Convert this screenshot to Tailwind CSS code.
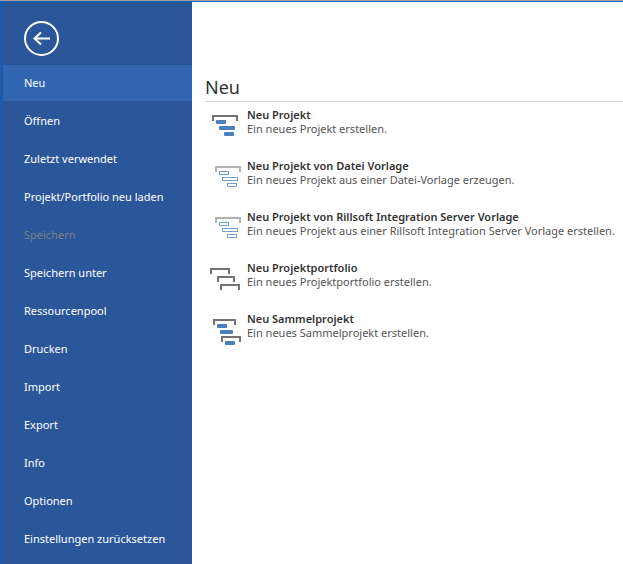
<!DOCTYPE html>
<html lang="de">
<head>
<meta charset="utf-8">
<meta name="viewport" content="width=device-width, initial-scale=1">
<title>Neu</title>
<script src="https://cdn.jsdelivr.net/npm/@tailwindcss/browser@4"></script>
</head>
<body class="min-h-screen bg-white font-['Noto_Sans',sans-serif] text-[11px] leading-[14px]">
<div class="flex min-h-screen flex-col">
  <div class="h-0.5 border-t border-[#a0a0a0] bg-[#1a5fb4]"></div>
  <div class="flex flex-1">
    <nav aria-label="Datei" class="w-48 shrink-0 border-l border-[#0a60c8] bg-[#2b579a] pl-0.5 text-white">
      <button type="button" aria-label="Zurück" class="mt-[18px] mb-2 ml-5 block">
        <svg class="block size-[37px]" viewBox="0 0 37 37" fill="none" stroke="#fff" stroke-width="2">
          <circle cx="18.5" cy="18.5" r="16.5"/>
          <path d="M27 18.5H11.5M18 12.5L11.5 18.5L18 24.5" stroke-width="2"/>
        </svg>
      </button>
      <ul class="flex flex-col gap-0.5">
        <li><a href="#" aria-current="page" class="flex h-9 items-center bg-[#3165b1] pl-[21px]">Neu</a></li>
        <li><a href="#" class="flex h-9 items-center pl-[21px]">Öffnen</a></li>
        <li><a href="#" class="flex h-9 items-center pl-[21px]">Zuletzt verwendet</a></li>
        <li><a href="#" class="flex h-9 items-center pl-[21px]">Projekt/Portfolio neu laden</a></li>
        <li><a aria-disabled="true" class="flex h-9 items-center pl-[21px] text-[#7d7f86]">Speichern</a></li>
        <li><a href="#" class="flex h-9 items-center pl-[21px]">Speichern unter</a></li>
        <li><a href="#" class="flex h-9 items-center pl-[21px]">Ressourcenpool</a></li>
        <li><a href="#" class="flex h-9 items-center pl-[21px]">Drucken</a></li>
        <li><a href="#" class="flex h-9 items-center pl-[21px]">Import</a></li>
        <li><a href="#" class="flex h-9 items-center pl-[21px]">Export</a></li>
        <li><a href="#" class="flex h-9 items-center pl-[21px]">Info</a></li>
        <li><a href="#" class="flex h-9 items-center pl-[21px]">Optionen</a></li>
        <li><a href="#" class="flex h-9 items-center pl-[21px]">Einstellungen zurücksetzen</a></li>
      </ul>
    </nav>
    <main class="min-w-0 flex-1 pt-[73px] pl-[13px] text-[#555]">
      <h1 class="border-b border-[#d0d0d0] pb-0.5 text-[18px] leading-6 text-[#333]">Neu</h1>
      <ul class="mt-1.5 flex flex-col gap-[15px]">
        <li><button type="button" class="flex h-9 w-full items-start text-left">
          <svg class="h-9 w-[42px] shrink-0" viewBox="0 0 42 36"><path d="M8 13V8H32V13" fill="none" stroke="#737373" stroke-width="2"/><g fill="#4a80bb"><rect x="11" y="12" width="10" height="4" rx="1"/><rect x="14" y="18" width="16" height="4" rx="1"/><rect x="19" y="24" width="10" height="4" rx="1"/></g></svg>
          <span><strong class="block font-semibold text-[#333]">Neu Projekt</strong>Ein neues Projekt erstellen.</span>
        </button></li>
        <li><button type="button" class="flex h-9 w-full items-start text-left">
          <svg class="h-9 w-[42px] shrink-0" viewBox="0 0 42 36" fill="none"><path d="M11 13V8H35V13" stroke="#b2b2b2" stroke-width="2"/><g stroke="#76a0ce"><rect x="14.5" y="12.5" width="9" height="3"/><rect x="17.5" y="18.5" width="15" height="3"/><rect x="22.5" y="24.5" width="9" height="3"/></g></svg>
          <span><strong class="block font-semibold text-[#333]">Neu Projekt von Datei Vorlage</strong>Ein neues Projekt aus einer Datei-Vorlage erzeugen.</span>
        </button></li>
        <li><button type="button" class="flex h-9 w-full items-start text-left">
          <svg class="h-9 w-[42px] shrink-0" viewBox="0 0 42 36" fill="none"><path d="M11 13V8H35V13" stroke="#b2b2b2" stroke-width="2"/><g stroke="#76a0ce"><rect x="14.5" y="12.5" width="9" height="3"/><rect x="17.5" y="18.5" width="15" height="3"/><rect x="22.5" y="24.5" width="9" height="3"/></g></svg>
          <span><strong class="block font-semibold text-[#333]">Neu Projekt von Rillsoft Integration Server Vorlage</strong>Ein neues Projekt aus einer Rillsoft Integration Server Vorlage erstellen.</span>
        </button></li>
        <li><button type="button" class="flex h-9 w-full items-start text-left">
          <svg class="h-9 w-[42px] shrink-0" viewBox="0 0 42 36" fill="none" stroke="#737373" stroke-width="2"><path d="M6 13V8H24V13M13 21V16H29V21M16 29V24H34V29"/></svg>
          <span><strong class="block font-semibold text-[#333]">Neu Projektportfolio</strong>Ein neues Projektportfolio erstellen.</span>
        </button></li>
        <li><button type="button" class="flex h-9 w-full items-start text-left">
          <svg class="h-9 w-[42px] shrink-0" viewBox="0 0 42 36"><path d="M9 13V8H30V13M17 30V25H35V30" fill="none" stroke="#737373" stroke-width="2"/><g fill="#4a80bb"><rect x="12" y="12" width="10" height="4" rx="1"/><rect x="15" y="18" width="13" height="4" rx="1"/><rect x="20" y="29" width="10" height="4" rx="1"/></g></svg>
          <span><strong class="block font-semibold text-[#333]">Neu Sammelprojekt</strong>Ein neues Sammelprojekt erstellen.</span>
        </button></li>
      </ul>
    </main>
  </div>
</div>
</body>
</html>
